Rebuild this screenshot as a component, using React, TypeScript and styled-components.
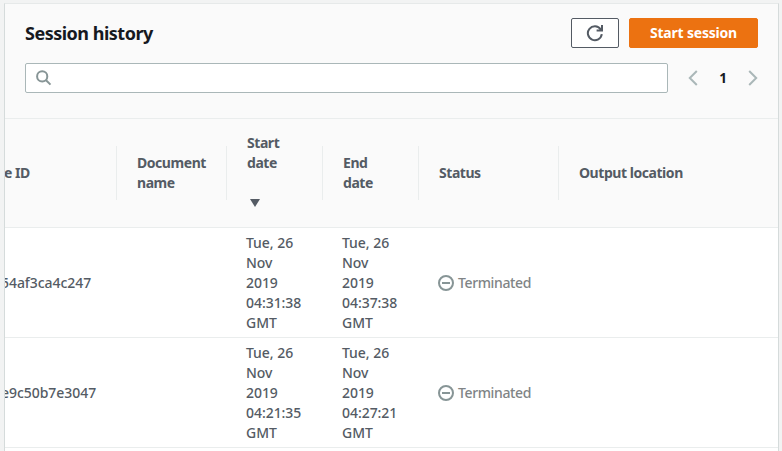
import React from 'react';
import styled, { createGlobalStyle } from 'styled-components';

const GlobalStyle = createGlobalStyle`
  * { box-sizing: border-box; }
  body {
    margin: 0;
    height: 451px;
    overflow: hidden;
    background: #f2f3f3;
    font-family: "Noto Sans", "Open Sans", sans-serif;
    font-size: 14px;
    line-height: 20px;
    color: #545b64;
  }
`;

const Panel = styled.section`
  width: 775px;
  height: 448px;
  margin: 3px 0 0 4px;
  overflow: hidden;
  background: #fff;
  border: 1px solid #d5dbdb;
  border-top-color: #e6e9e9;
  border-bottom: 0;
`;

const PanelHeader = styled.header`
  height: 115px;
  padding: 14px 20px 0;
  background: #fafafa;
  border-bottom: 1px solid #eaeded;
`;

const TitleRow = styled.div`
  display: flex;
  align-items: center;
  height: 30px;
  gap: 10px;
`;

const Title = styled.h2`
  flex: 1;
  margin: 0;
  font-size: 18px;
  line-height: 22px;
  font-weight: 700;
  letter-spacing: -0.5px;
  color: #16191f;
`;

const Button = styled.button<{ $primary?: boolean }>`
  display: flex;
  align-items: center;
  justify-content: center;
  width: ${(p) => (p.$primary ? '129px' : '48px')};
  height: 30px;
  padding: 0;
  border: 1px solid ${(p) => (p.$primary ? '#ec7211' : '#545b64')};
  border-radius: 2px;
  background: ${(p) => (p.$primary ? '#ec7211' : '#fff')};
  color: ${(p) => (p.$primary ? '#fff' : '#545b64')};
  font: 700 14px/20px "Noto Sans", sans-serif;
  letter-spacing: -0.2px;
`;

const FilterRow = styled.div`
  display: flex;
  align-items: center;
  margin-top: 15px;
  height: 30px;
`;

const SearchBox = styled.div`
  display: flex;
  align-items: center;
  width: 643px;
  height: 30px;
  padding-left: 10px;
  background: #fff;
  border: 1px solid #aab7b8;
  border-radius: 2px;
`;

const Pagination = styled.nav`
  display: flex;
  flex: 1;
  align-items: center;
  justify-content: space-between;
  padding-left: 20px;
`;

const PageNumber = styled.span`
  font-weight: 700;
  font-size: 13.5px;
  color: #16191f;
`;

const Icon = styled.svg`
  display: block;
  flex: none;
  fill: none;
`;

const Row = styled.div`
  display: grid;
  grid-template-columns: 112px 110px 96px 96px 140px 1fr;
  align-items: center;
  height: 110px;
  font-weight: 500;
  letter-spacing: -0.05px;
  border-bottom: 1px solid #eaeded;
`;

const HeadRow = styled(Row)`
  height: 109px;
  background: #fafafa;
  font-weight: 700;
  letter-spacing: -0.45px;
`;

const HeadCell = styled.div<{ $last?: boolean; $narrow?: boolean }>`
  display: flex;
  flex-direction: column;
  justify-content: center;
  height: 54px;
  padding: 0 ${(p) => (p.$narrow ? '36px' : '18px')} 0 20px;
  border-right: ${(p) => (p.$last ? '0' : '1px solid #eaeded')};
`;

const ClippedHeadCell = styled(HeadCell)`
  padding-left: 0;
  margin-left: -1px;
  white-space: nowrap;
`;

const SortMark = styled(Icon)`
  margin: 26px 0 6px 3px;
  fill: #545b64;
`;

const Cell = styled.div`
  padding: 0 18px 0 19px;
`;

const IdCell = styled.div<{ $shift: number }>`
  overflow: hidden;
  white-space: nowrap;
  text-indent: ${(p) => p.$shift}px;
`;

const Status = styled.div`
  display: flex;
  align-items: center;
  gap: 4px;
  padding-left: 19px;
  color: #879596;
`;

const StatusLabel = styled.span`
  color: #808486;
  letter-spacing: -0.38px;
`;

const RefreshIcon = () => (
  <Icon width="18" height="18" viewBox="0 0 18 18" stroke="#545b64" strokeWidth="2">
    <path d="M15.8 10.2A7 7 0 1 1 14.6 5.2" />
    <path d="M16 1v5.4h-5.4" />
    <path d="M13 6l3-3v3z" fill="#545b64" stroke="none" />
  </Icon>
);

const SearchIcon = () => (
  <Icon width="16" height="16" viewBox="0 0 16 16" stroke="#879596" strokeWidth="2">
    <circle cx="6.2" cy="6.4" r="5.1" />
    <path d="M9.8 10l4.7 4.6" />
  </Icon>
);

const Chevron = ({ next }: { next?: boolean }) => (
  <Icon width="10" height="16" viewBox="0 0 10 16" stroke="#aab7b8" strokeWidth="2">
    <path d={next ? 'M1.2 1l7 7-7 7' : 'M8.8 1l-7 7 7 7'} />
  </Icon>
);

const StoppedIcon = () => (
  <Icon width="16" height="16" viewBox="0 0 16 16" stroke="currentColor" strokeWidth="2">
    <circle cx="8" cy="8" r="7" />
    <path d="M4 8h8" />
  </Icon>
);

const sessions = [
  { id: '54af3ca4c247', shift: -4, start: '04:31:38', end: '04:37:38' },
  { id: 'e9c50b7e3047', shift: -4, start: '04:21:35', end: '04:27:21' },
];

export default function App() {
  return (
    <>
      <GlobalStyle />
      <Panel>
        <PanelHeader>
          <TitleRow>
            <Title>Session history</Title>
            <Button aria-label="Refresh"><RefreshIcon /></Button>
            <Button $primary>Start session</Button>
          </TitleRow>
          <FilterRow>
            <SearchBox><SearchIcon /></SearchBox>
            <Pagination>
              <Chevron />
              <PageNumber>1</PageNumber>
              <Chevron next />
            </Pagination>
          </FilterRow>
        </PanelHeader>
        <HeadRow>
          <ClippedHeadCell>e ID</ClippedHeadCell>
          <HeadCell>Document name</HeadCell>
          <HeadCell $narrow>
            Start date
            <SortMark width="10" height="8" viewBox="0 0 10 8"><path d="M0 0h10L5 8z" /></SortMark>
          </HeadCell>
          <HeadCell $narrow>End date</HeadCell>
          <HeadCell>Status</HeadCell>
          <HeadCell $last>Output location</HeadCell>
        </HeadRow>
        {sessions.map((s) => (
          <Row key={s.id}>
            <IdCell $shift={s.shift}>{s.id}</IdCell>
            <Cell />
            <Cell>Tue, 26 Nov 2019 {s.start} GMT</Cell>
            <Cell>Tue, 26 Nov 2019 {s.end} GMT</Cell>
            <Status><StoppedIcon /><StatusLabel>Terminated</StatusLabel></Status>
            <Cell />
          </Row>
        ))}
      </Panel>
    </>
  );
}
